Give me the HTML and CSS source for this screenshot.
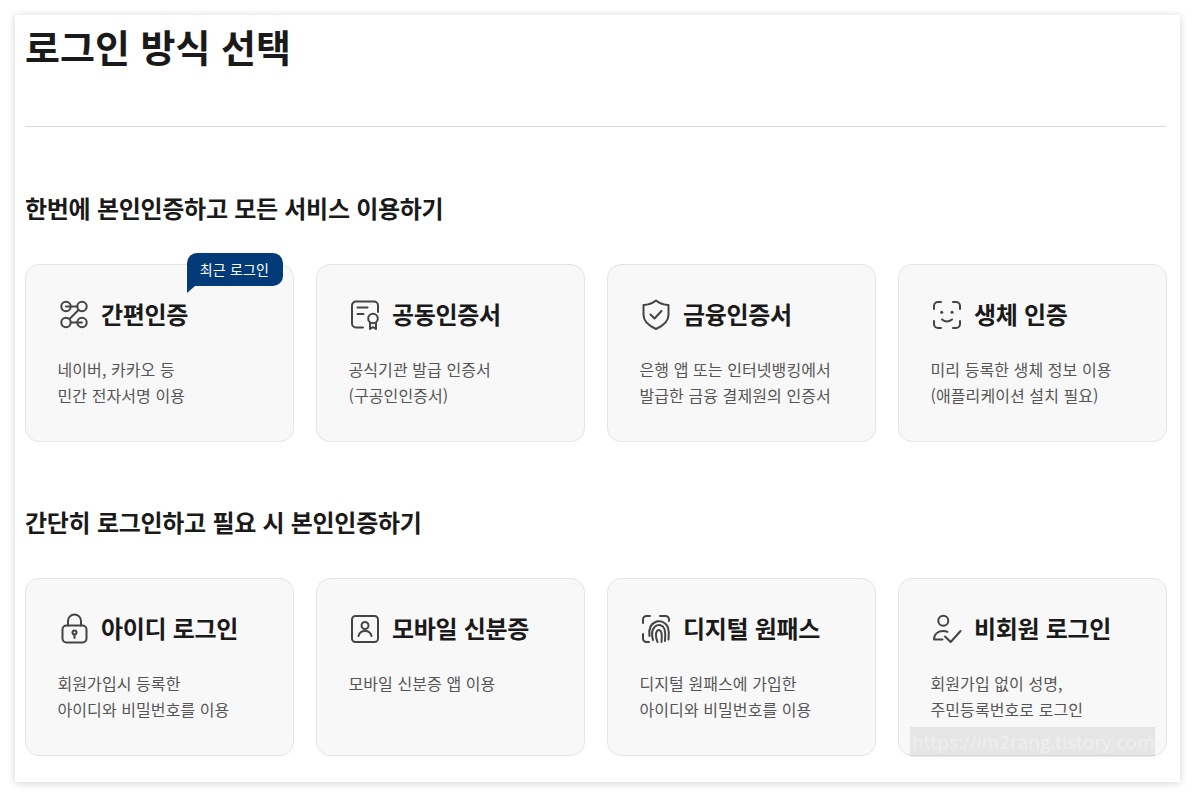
FILE: index.html
```html
<!DOCTYPE html>
<html lang="ko">
<head>
<meta charset="utf-8">
<title>로그인 방식 선택</title>
<link rel="stylesheet" href="styles.css">
</head>
<body>
<main class="panel">
  <h1 class="title">로그인 방식 선택</h1>
  <section class="group group-first">
    <h2 class="group-title">한번에 본인인증하고 모든 서비스 이용하기</h2>
    <div class="cards">
      <a class="card">
        <span class="badge">최근 로그인</span>
        <div class="card-head">
          <svg class="icon" viewBox="0 0 32 32"><circle cx="8" cy="8.500" r="4.700"/><circle cx="24" cy="8.500" r="4.700"/><circle cx="8" cy="24.500" r="4.700"/><circle cx="24" cy="24.500" r="4.700"/><path d="M8 8.500H19.300M12.700 24.500H24M20.500 12L11.500 21"/></svg>
          <h3 class="card-title">간편인증</h3>
        </div>
        <p class="card-desc">네이버, 카카오 등<br>민간 전자서명 이용</p>
      </a>
      <a class="card">
        <div class="card-head">
          <svg class="icon" viewBox="0 0 32 32"><path d="M14 29.500H7a4 4 0 0 1-4-4V7.500a4 4 0 0 1 4-4h18a4 4 0 0 1 4 4V14"/><path d="M8.500 9.500h10M8.500 16h6"/><circle cx="24" cy="20.500" r="4.800"/><path d="M21 25v6l3-2 3 2v-6"/></svg>
          <h3 class="card-title">공동인증서</h3>
        </div>
        <p class="card-desc">공식기관 발급 인증서<br>(구공인인증서)</p>
      </a>
      <a class="card">
        <div class="card-head">
          <svg class="icon" viewBox="0 0 32 32"><path d="M16 2.500c3.500 2.800 7.500 4.300 12.500 4.500V17c0 6.500-5.500 10.800-12.500 14-7-3.200-12.500-7.500-12.500-14V7c5-.2 9-1.700 12.500-4.500z"/><path d="M10.500 16.500l4 4 7-7.500"/></svg>
          <h3 class="card-title">금융인증서</h3>
        </div>
        <p class="card-desc">은행 앱 또는 인터넷뱅킹에서<br>발급한 금융 결제원의 인증서</p>
      </a>
      <a class="card">
        <div class="card-head">
          <svg class="icon" viewBox="0 0 32 32"><path d="M3 11V8a4 4 0 0 1 4-4h3M22 4h3a4 4 0 0 1 4 4v3M3 23v3a4 4 0 0 0 4 4h3M29 23v3a4 4 0 0 1-4 4h-3"/><path d="M11 21.500c3 2.500 7 2.500 10 0"/><circle class="dot" cx="10.700" cy="14.300" r="1.500"/><circle class="dot" cx="21" cy="14.300" r="1.500"/></svg>
          <h3 class="card-title">생체 인증</h3>
        </div>
        <p class="card-desc">미리 등록한 생체 정보 이용<br>(애플리케이션 설치 필요)</p>
      </a>
    </div>
  </section>
  <section class="group">
    <h2 class="group-title">간단히 로그인하고 필요 시 본인인증하기</h2>
    <div class="cards">
      <a class="card">
        <div class="card-head">
          <svg class="icon" viewBox="0 0 32 32"><rect x="4.500" y="13.500" width="24" height="17" rx="4"/><path d="M10 13.500V9a6.500 6.500 0 0 1 13 0v4.500"/><circle cx="16.500" cy="20.500" r="2"/><path d="M16.500 22.500V26"/></svg>
          <h3 class="card-title">아이디 로그인</h3>
        </div>
        <p class="card-desc">회원가입시 등록한<br>아이디와 비밀번호를 이용</p>
      </a>
      <a class="card">
        <div class="card-head">
          <svg class="icon" viewBox="0 0 32 32"><rect x="3" y="4" width="26" height="26" rx="3.500"/><circle cx="16" cy="13.500" r="3.500"/><path d="M9.500 24c.8-3.400 3.300-5 6.500-5s5.700 1.600 6.500 5"/></svg>
          <h3 class="card-title">모바일 신분증</h3>
        </div>
        <p class="card-desc">모바일 신분증 앱 이용</p>
      </a>
      <a class="card">
        <div class="card-head">
          <svg class="icon" viewBox="0 0 32 32"><path d="M3 11V7.500A3.500 3.500 0 0 1 6.500 4H10M3 22v4.500A3.500 3.500 0 0 0 6.500 30H9M20 4h5.500A3.500 3.500 0 0 1 29 7.500V9"/><path d="M9.500 24C8.500 17 11 11.500 16.500 9.500c5-1 9.500 1.500 11.500 6 1 3.500 1 8 .5 12"/><path d="M13 28c-1.500-5-1.500-10 2-13.500 3.500-2.500 8-1.500 9.500 2.500 1 3.500 1 8 .5 12"/><path d="M17.500 30c-1.500-4-2.500-8-.5-11 2-2 4-.5 4.500 2 .5 3 .3 6 0 9"/></svg>
          <h3 class="card-title">디지털 원패스</h3>
        </div>
        <p class="card-desc">디지털 원패스에 가입한<br>아이디와 비밀번호를 이용</p>
      </a>
      <a class="card">
        <div class="card-head">
          <svg class="icon" viewBox="0 0 32 32"><circle cx="12.300" cy="8.700" r="5"/><path d="M3 27.500c0-5.500 4-8.500 9.300-8.500 1.700 0 3 .3 4.200.8M3 27.500h8.500"/><path d="M14 24.500l5.700 5.500L29.500 19"/></svg>
          <h3 class="card-title">비회원 로그인</h3>
        </div>
        <p class="card-desc">회원가입 없이 성명,<br>주민등록번호로 로그인</p>
      </a>
    </div>
  </section>
  <div class="watermark">https://im2rang.tistory.com</div>
</main>
</body>
</html>
```
FILE: styles.css
```css
* { box-sizing: border-box; }
html, body { margin: 0; padding: 0; }
body {
  background: #fff;
  padding: 15px;
  font-family: "Noto Sans CJK KR", "Noto Sans", sans-serif;
  color: #1a1a1a;
}
.panel {
  position: relative;
  height: 767px;
  width: 1165px;
  padding: 0 13px 0 10px;
  background: #fff;
  box-shadow: 0 1px 8px rgba(0,0,0,.18);
}
.title {
  margin: 0 1px 0 0;
  height: 112px;
  border-bottom: 1px solid #d8d8d8;
  font-size: 38px;
  line-height: 62px;
  font-weight: 700;
  color: #1a1a1a;
}
.group { margin-top: 62px; }
.group-first { margin-top: 63px; }
.group-title {
  margin: 0 0 38px;
  font-size: 24px;
  line-height: 36px;
  font-weight: 700;
  letter-spacing: -0.27px;
}
.cards {
  display: grid;
  grid-template-columns: repeat(4, 269px);
  column-gap: 22px;
}
.card {
  position: relative;
  display: block;
  height: 178px;
  padding: 31px 31px 0;
  background: #f8f8f8;
  border: 1px solid #e5e5e5;
  border-radius: 14px;
}
.card-head {
  display: flex;
  align-items: center;
  gap: 11px;
  height: 36px;
}
.icon {
  width: 32px;
  height: 32px;
  margin-left: 1px;
  fill: none;
  stroke: #444;
  stroke-width: 2;
  stroke-linecap: round;
  stroke-linejoin: round;
  flex: none;
}
.dot { fill: #444; stroke: none; }
.card-title {
  margin: 0;
  font-size: 24px;
  line-height: 36px;
  font-weight: 700;
  letter-spacing: -0.3px;
  color: #1a1a1a;
}
.card-desc {
  margin: 24px 0 0 0.5px;
  font-size: 16px;
  line-height: 26px;
  letter-spacing: 0.08px;
  color: #555;
}
.badge {
  position: absolute;
  top: -12px;
  right: 10px;
  height: 33px;
  padding: 0 14px 0 13px;
  background: #033b78;
  color: #fff;
  font-size: 14px;
  letter-spacing: 0.15px;
  line-height: 33px;
  border-radius: 10px 10px 10px 0;
}
.badge::after {
  content: "";
  position: absolute;
  left: 0;
  top: 33px;
  border-top: 7px solid #033b78;
  border-right: 8px solid transparent;
}
.watermark {
  position: absolute;
  left: 895px;
  top: 712px;
  width: 245px;
  height: 30px;
  padding-left: 2px;
  background: rgba(0,0,0,.07);
  color: #efefef;
  font-family: "Open Sans", sans-serif;
  font-size: 19px;
  line-height: 30px;
  white-space: nowrap;
}
```
